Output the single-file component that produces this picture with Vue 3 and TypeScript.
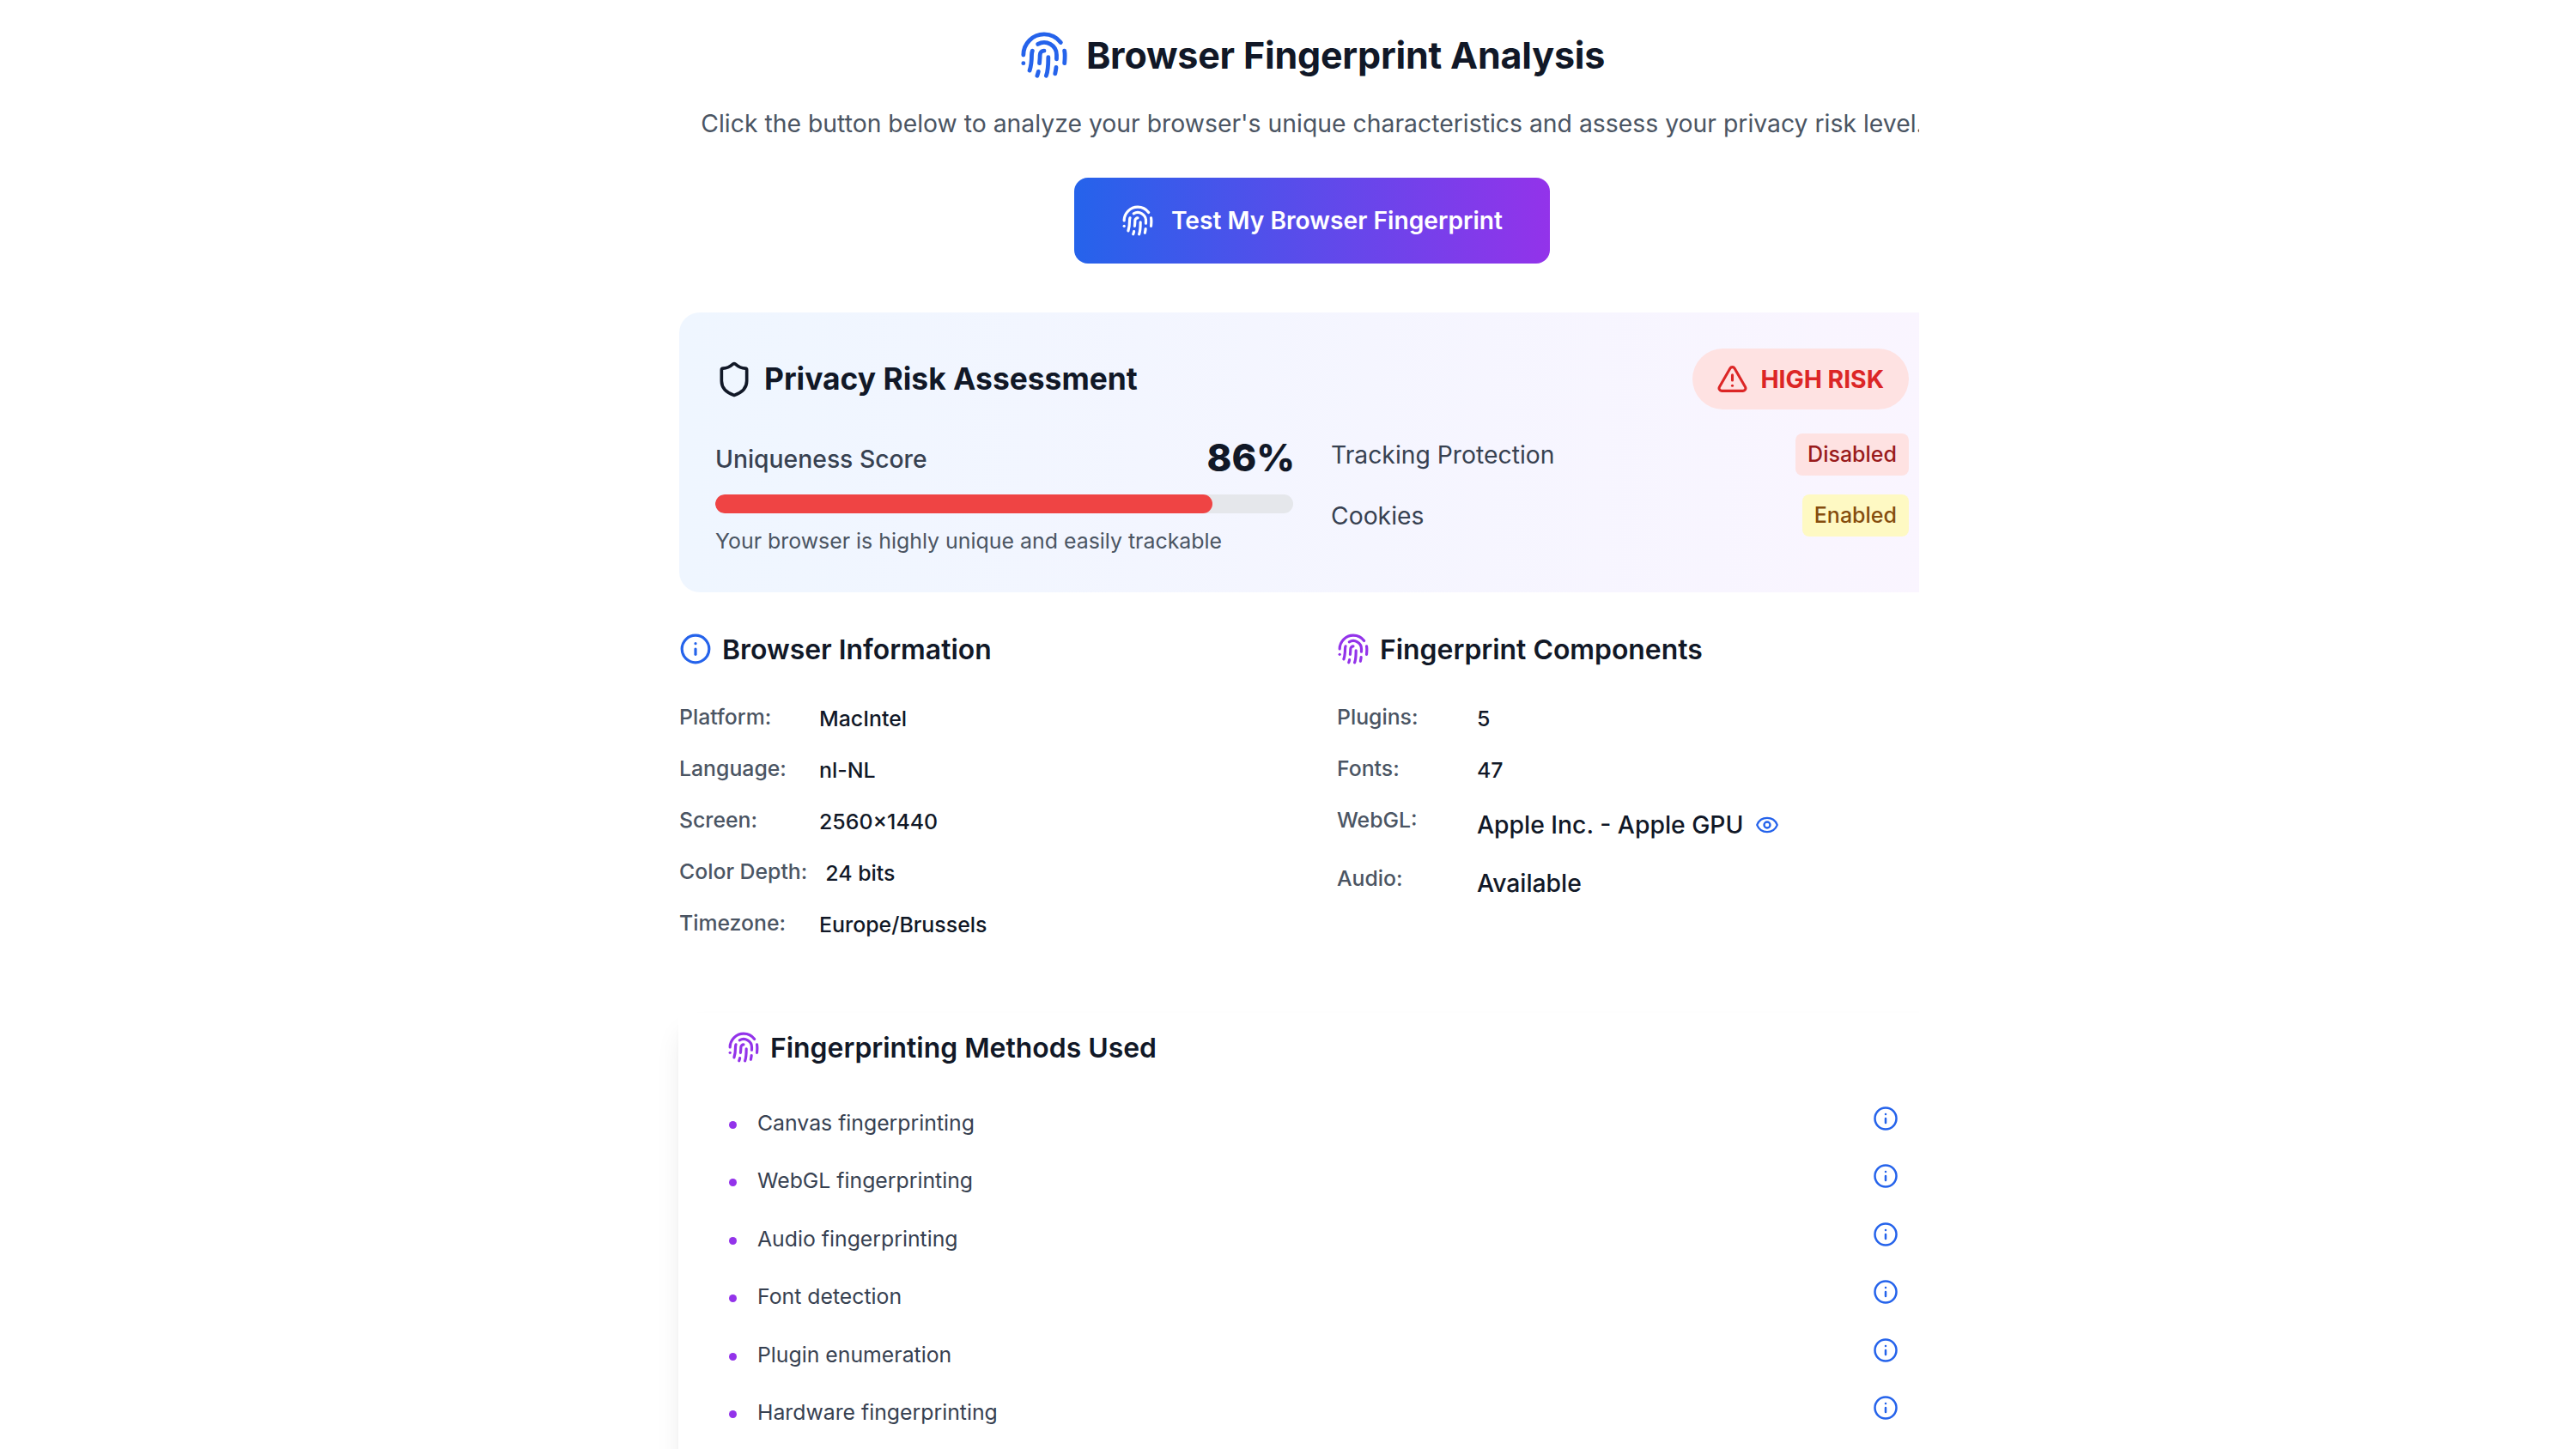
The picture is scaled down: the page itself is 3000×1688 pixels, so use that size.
<script setup lang="ts">
const fp: string[] = [
  'M2 12C2 6.5 6.5 2 12 2a10 10 0 0 1 8 4',
  'M5 19.5C5.5 18 6 15 6 12c0-.7.12-1.37.34-2',
  'M17.29 21.02c.12-.6.43-2.3.5-3.02',
  'M12 10a2 2 0 0 0-2 2c0 1.02-.1 2.51-.26 4',
  'M8.65 22c.21-.66.45-1.32.57-2',
  'M14 13.12c0 2.38 0 6.38-1 8.88',
  'M2 16h.01',
  'M21.8 16c.2-2 .131-5.354 0-6',
  'M9 6.8a6 6 0 0 1 9 5.2c0 .47 0 1.17-.02 2',
]
const browserInfo = [
  { label: 'Platform:', value: 'MacIntel' },
  { label: 'Language:', value: 'nl-NL' },
  { label: 'Screen:', value: '2560×1440' },
  { label: 'Color Depth:', value: '24 bits' },
  { label: 'Timezone:', value: 'Europe/Brussels' },
]
const methods = [
  'Canvas fingerprinting',
  'WebGL fingerprinting',
  'Audio fingerprinting',
  'Font detection',
  'Plugin enumeration',
  'Hardware fingerprinting',
]
const score = 86
</script>

<template>
  <main class="page">
    <header class="hero">
      <h1 class="title">
        <svg class="icon i-title" viewBox="0 0 24 24"><path v-for="d in fp" :key="d" :d="d" /></svg>
        <span>Browser Fingerprint Analysis</span>
      </h1>
      <p class="subtitle">Click the button below to analyze your browser's unique characteristics and assess your privacy risk level.</p>
      <button class="cta">
        <svg class="icon i-btn" viewBox="0 0 24 24"><path v-for="d in fp" :key="d" :d="d" /></svg>
        <span>Test My Browser Fingerprint</span>
      </button>
    </header>

    <section class="risk">
      <div class="risk-head">
        <h2 class="risk-title">
          <svg class="icon i-shield" viewBox="0 0 24 24"><path d="M20 13c0 5-3.5 7.5-7.66 8.95a1 1 0 0 1-.67-.01C7.5 20.5 4 18 4 13V6a1 1 0 0 1 1-1c2 0 4.5-1.2 6.24-2.72a1.17 1.17 0 0 1 1.52 0C14.51 3.81 17 5 19 5a1 1 0 0 1 1 1z" /></svg>
          <span>Privacy Risk Assessment</span>
        </h2>
        <div class="pill">
          <svg class="icon i-alert" viewBox="0 0 24 24"><path d="m21.73 18-8-14a2 2 0 0 0-3.48 0l-8 14A2 2 0 0 0 4 21h16a2 2 0 0 0 1.73-3" /><path d="M12 9v4" /><path d="M12 17h.01" /></svg>
          <span>HIGH RISK</span>
        </div>
      </div>
      <div class="risk-body">
        <div class="score">
          <div class="score-row">
            <span class="score-label">Uniqueness Score</span>
            <span class="score-num">{{ score }}%</span>
          </div>
          <div class="track"><div class="fill" :style="{ width: score + '%' }"></div></div>
          <p class="score-note">Your browser is highly unique and easily trackable</p>
        </div>
        <div class="flags">
          <div class="flag">
            <span class="flag-label">Tracking Protection</span>
            <span class="tag tag-red">Disabled</span>
          </div>
          <div class="flag">
            <span class="flag-label">Cookies</span>
            <span class="tag tag-yellow">Enabled</span>
          </div>
        </div>
      </div>
    </section>

    <section class="columns">
      <div>
        <h3 class="sub-head">
          <svg class="icon i-head blue" viewBox="0 0 24 24"><circle cx="12" cy="12" r="10" /><path d="M12 16v-4" /><path d="M12 8h.01" /></svg>
          <span>Browser Information</span>
        </h3>
        <dl class="rows">
          <div v-for="row in browserInfo" :key="row.label" class="row">
            <dt class="k">{{ row.label }}</dt>
            <dd class="v">{{ row.value }}</dd>
          </div>
        </dl>
      </div>
      <div>
        <h3 class="sub-head">
          <svg class="icon i-head purple" viewBox="0 0 24 24"><path v-for="d in fp" :key="d" :d="d" /></svg>
          <span>Fingerprint Components</span>
        </h3>
        <dl class="rows">
          <div class="row"><dt class="k">Plugins:</dt><dd class="v">5</dd></div>
          <div class="row"><dt class="k">Fonts:</dt><dd class="v">47</dd></div>
          <div class="row">
            <dt class="k">WebGL:</dt>
            <dd class="v v-big">
              <span>Apple Inc. - Apple GPU</span>
              <svg class="icon i-eye blue" viewBox="0 0 24 24"><path d="M2.062 12.348a1 1 0 0 1 0-.696 10.75 10.75 0 0 1 19.876 0 1 1 0 0 1 0 .696 10.75 10.75 0 0 1-19.876 0" /><circle cx="12" cy="12" r="3" /></svg>
            </dd>
          </div>
          <div class="row"><dt class="k">Audio:</dt><dd class="v v-big">Available</dd></div>
        </dl>
      </div>
    </section>

    <section class="methods">
      <h3 class="sub-head">
        <svg class="icon i-head purple" viewBox="0 0 24 24"><path v-for="d in fp" :key="d" :d="d" /></svg>
        <span>Fingerprinting Methods Used</span>
      </h3>
      <ul class="method-list">
        <li v-for="m in methods" :key="m" class="method">
          <span class="dot"></span>
          <span class="method-name">{{ m }}</span>
          <svg class="icon i-info blue" viewBox="0 0 24 24"><circle cx="12" cy="12" r="10" /><path d="M12 16v-4" /><path d="M12 8h.01" /></svg>
        </li>
      </ul>
    </section>
  </main>
</template>

<style>
html, body { margin: 0; height: 100%; overflow: hidden; background: #fff; }
</style>

<style scoped>
.page {
  box-sizing: border-box;
  width: 1474px;
  margin-left: 791px;
  font-family: Inter, "Liberation Sans", sans-serif;
  color: #111827;
  clip-path: inset(0 30px 0 -60px);
}
.icon {
  display: block;
  flex: none;
  fill: none;
  stroke: currentColor;
  stroke-width: 2;
  stroke-linecap: round;
  stroke-linejoin: round;
}
.blue { color: #2563eb; }
.purple { color: #9333ea; }

.hero { display: flex; flex-direction: column; align-items: center; padding-top: 36px; }
.title {
  display: flex; align-items: center; gap: 20px;
  margin: 0; height: 56px;
  font-size: 43px; line-height: 56px; font-weight: 700; letter-spacing: -0.2px;
}
.i-title { width: 58px; height: 58px; color: #2563eb; }
.subtitle { margin: 32px 0 0; font-size: 28.35px; line-height: 40px; color: #4b5563; white-space: nowrap; }
.cta {
  display: flex; align-items: center; justify-content: center; gap: 20px;
  width: 554px; height: 100px; margin-top: 43px; padding: 0;
  border: 0; border-radius: 16px;
  background: linear-gradient(90deg, #2563eb, #9333ea);
  color: #fff;
  font-family: inherit; font-size: 28.2px; font-weight: 600;
}
.i-btn { width: 38px; height: 38px; }

.risk {
  box-sizing: border-box;
  margin-top: 57px; height: 326px;
  padding: 42px 42px 0;
  border-radius: 24px;
  background: linear-gradient(90deg, #eff6ff, #faf5ff);
}
.risk-head { display: flex; justify-content: space-between; align-items: center; height: 71px; }
.risk-title { display: flex; align-items: center; gap: 13px; margin: 0; font-size: 35.4px; line-height: 44px; font-weight: 700; }
.i-shield { width: 44px; height: 44px; }
.pill {
  display: flex; align-items: center; gap: 14px;
  height: 71px; padding: 0 29px 0 28px;
  border-radius: 36px;
  background: #fee2e2; color: #dc2626;
  font-size: 28.3px; font-weight: 700;
}
.i-alert { width: 37px; height: 37px; }
.risk-body { display: grid; grid-template-columns: 1fr 1fr; gap: 44px; margin-top: 28px; }
.score { padding-top: 4px; }
.score-row { display: flex; justify-content: space-between; align-items: center; height: 52px; }
.score-label { font-size: 28.3px; color: #374151; font-weight: 500; }
.score-num { margin: -5px -2px 0 0; font-size: 43.5px; font-weight: 800; }
.track { height: 22px; margin-top: 15px; border-radius: 11px; background: #e5e7eb; overflow: hidden; }
.fill { height: 100%; border-radius: 11px; background: #ef4444; }
.score-note { margin: 16px 0 0; font-size: 24.9px; line-height: 32px; color: #4b5563; }
.flags { display: flex; flex-direction: column; gap: 22px; }
.flag { display: flex; justify-content: space-between; align-items: center; height: 49px; }
.flag-label { font-size: 28.3px; color: #374151; }
.tag { padding: 0 14px; height: 49px; line-height: 49px; border-radius: 8px; font-size: 25px; font-weight: 500; }
.tag-red { background: #fee2e2; color: #991b1b; }
.tag-yellow { background: #fef9c3; color: #854d0e; }

.columns { display: grid; grid-template-columns: 708px 708px; column-gap: 58px; margin-top: 46px; }
.sub-head { display: flex; align-items: center; gap: 12px; height: 40px; margin: 0; font-size: 31.9px; font-weight: 600; }
.i-head { width: 38px; height: 38px; }
.rows { display: flex; flex-direction: column; gap: 24px; margin: 43px 0 0; }
.row { display: flex; align-items: flex-start; }
.k { min-width: 142px; margin-right: 21px; font-size: 24.8px; line-height: 32px; color: #4b5563; font-weight: 500; }
.v { display: flex; align-items: center; gap: 14px; margin: 0; font-size: 24.9px; line-height: 36px; font-weight: 500; color: #111827; }
.v-big { font-size: 28.3px; line-height: 44px; }
.i-eye { width: 28px; height: 28px; }

.methods {
  box-sizing: border-box;
  margin-top: 85px; height: 800px;
  padding: 20px 54px 0 57px;
  margin-left: -1px;
  background: #fff;
  box-shadow: 0 20px 30px -6px rgba(0, 0, 0, 0.1), 0 8px 12px -8px rgba(0, 0, 0, 0.1);
}
.method-list { list-style: none; margin: 48px 0 0; padding: 0; display: flex; flex-direction: column; gap: 27.4px; }
.method { display: flex; align-items: flex-start; height: 40px; }
.dot { flex: none; width: 9px; height: 9px; margin: 18px 24px 0 2px; border-radius: 50%; background: #9333ea; }
.method-name { flex: 1; font-size: 24.8px; line-height: 40px; color: #374151; }
.i-info { width: 30px; height: 30px; }
</style>
